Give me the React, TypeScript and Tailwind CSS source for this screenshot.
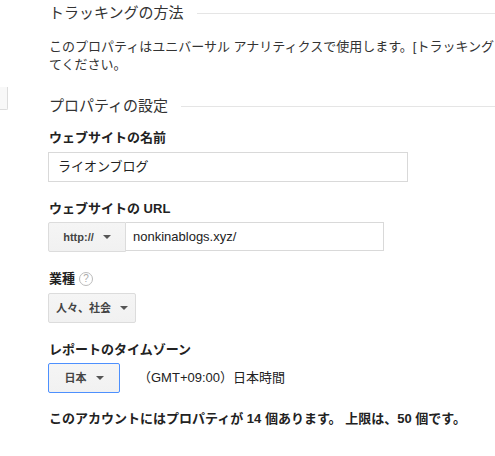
import React from 'react';

const font = { fontFamily: '"Liberation Sans", "Noto Sans CJK JP", sans-serif' };

// Small down arrow used in the dropdown buttons
const Caret: React.FC = () => (
  <span className="inline-block w-0 h-0 border-l-[4px] border-r-[4px] border-t-[4px] border-l-transparent border-r-transparent border-t-[#555]" />
);

const SectionHeader: React.FC<{ title: string }> = ({ title }) => (
  <div className="flex items-center h-[26px] pl-[49px]">
    <h2 className="text-[15px] font-normal text-[#333] whitespace-nowrap">{title}</h2>
    <div className="flex-1 h-px bg-[#e5e5e5] ml-[13px]" />
  </div>
);

const Label: React.FC<{ children: React.ReactNode; className?: string }> = ({ children, className }) => (
  <div className={`text-[13px] leading-[18px] font-bold text-[#222] flex items-center ${className ?? ''}`}>
    {children}
  </div>
);

const DropButton: React.FC<{ label: string; className?: string }> = ({ label, className }) => (
  <button
    className={`flex items-center justify-center gap-[9px] h-[30px] bg-gradient-to-b from-[#f5f5f5] to-[#f1f1f1] border rounded-[2px] text-[11px] font-bold text-[#444] ${className ?? ''}`}
  >
    <span>{label}</span>
    <Caret />
  </button>
);

export default function App() {
  return (
    <div className="w-[495px] h-[456px] overflow-hidden bg-white text-[#333]" style={font}>
      <SectionHeader title="トラッキングの方法" />

      <p className="mt-[12px] pl-[49px] text-[13px] leading-[18px] text-[#333] whitespace-nowrap">
        このプロパティはユニバーサル アナリティクスで使用します。[トラッキング コード] を使用し
        <br />
        てください。
      </p>

      <div className="relative mt-[19px]">
        <div className="absolute left-0 top-[-6px] w-[8px] h-[23px] bg-[#f8f8f8] border-r border-b border-[#dcdcdc] rounded-br-[2px]" />
        <SectionHeader title="プロパティの設定" />
      </div>

      <div className="pl-[48px]">
        <Label className="mt-[10px] pl-px">ウェブサイトの名前</Label>
        <div className="mt-[5px] w-[360px] h-[30px] border border-[#d9d9d9] flex items-center px-[9px] text-[13px] text-[#222]">
          ライオンブログ
        </div>

        <Label className="mt-[18px] pl-px">ウェブサイトの URL</Label>
        <div className="mt-[4px] flex h-[29px]">
          <DropButton label="http://" className="w-[78px] h-[29px] border-[#dcdcdc] rounded-r-none" />
          <div className="w-[258px] border border-l-0 border-[#d9d9d9] flex items-center px-[7px] text-[13px] text-[#222]">
            nonkinablogs.xyz/
          </div>
        </div>

        <Label className="mt-[19px] pl-px gap-[4px]">
          <span>業種</span>
          <span className="w-[14px] h-[14px] rounded-full border border-[#bbb] text-[#aaa] text-[10px] font-normal flex items-center justify-center">
            ?
          </span>
        </Label>
        <DropButton label="人々、社会" className="mt-[5px] w-[88px] border-[#dcdcdc]" />

        <Label className="mt-[18px] pl-px">レポートのタイムゾーン</Label>
        <div className="mt-[4px] flex items-center">
          <DropButton label="日本" className="w-[72px] border-[#4d90fe]" />
          <span className="ml-[18px] text-[13px] text-[#222]">（GMT+09:00）日本時間</span>
        </div>

        <Label className="mt-[17px] pl-px">
          このアカウントにはプロパティが 14 個あります。 上限は、50 個です。
        </Label>
      </div>
    </div>
  );
}
